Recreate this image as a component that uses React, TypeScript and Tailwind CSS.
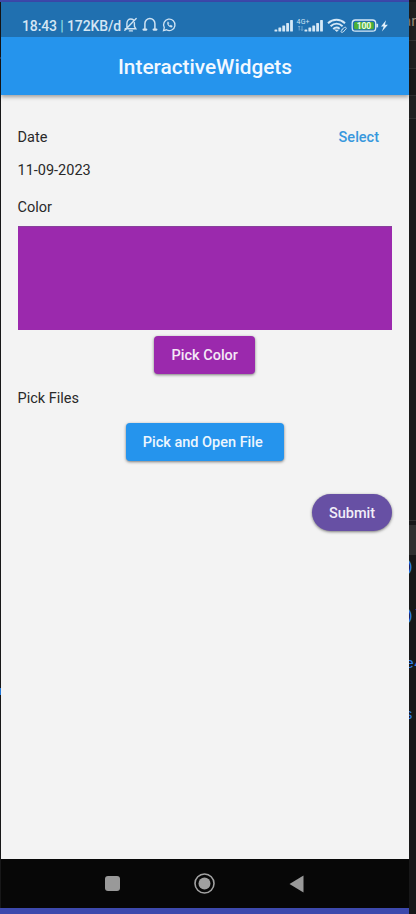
import React from "react";

function StatusLeftIcons() {
  return (
    <svg width="56" height="18" viewBox="0 0 56 18" fill="none" stroke="#cfe3f3" strokeWidth="1.4" strokeLinecap="round">
      {/* muted bell */}
      <path d="M3.9 12V7.5C3.9 4.6 5.600 3 7.800 3c1 0 1.900.3 2.600.9M11.400 6.800v3.600l1.400 2.300H5.200M1.800 14.200 13.200 2.400M6.400 14.900h3" />
      <path d="M2.200 12.800h2" />
      {/* headphones */}
      <path d="M21.900 13.200V7.500a5 5 0 0 1 10 0v5.700" strokeWidth="1.500" />
      <path d="M20.500 13.600h2.800M30.600 13.600h2.800" strokeWidth="2.200" />
      {/* chat */}
      <path d="m40.500 14.600.8-3a5.700 5.700 0 1 1 2.200 2.200z" strokeWidth="1.300" />
      <path d="M44.400 6.500c-.4 2.400 2 5 4.400 4.700l.6-1.300-1.700-.9-.8.8c-.9-.4-1.300-.9-1.600-1.700l.7-.8-.7-1.400z" fill="#cfe3f3" strokeWidth=".4" />
    </svg>
  );
}

function Signal({ x }: { x: number }) {
  return (
    <g fill="#d5e8f6">
      {[2, 4, 6, 8.5, 11.5].map((h, i) => (
        <rect key={h} x={x + i * 3.9} y={14.5 - h} width="2.8" height={h} rx=".6" />
      ))}
    </g>
  );
}

function StatusRightIcons() {
  return (
    <svg width="116" height="20" viewBox="0 0 116 20" fill="none">
      <Signal x={0.5} />
      <text x="22.600" y="7" fontSize="7" fill="#cfe3f3" className="font-[Roboto,sans-serif]" textLength="13">4G+</text>
      <path d="M25.200 13.500V9m-1 1 1-1 1 1M28 9v4.500m-1-1 1 1 1-1" stroke="#8fbbdc" strokeWidth=".7" />
      <Signal x={30.5} />
      <g stroke="#d5e8f6" strokeWidth="2">
        <path d="M54 6.200c5-4.600 12-4.600 17 0M56.600 9.200c3.600-3.200 8.400-3.200 12 0M59.200 12c2-1.700 4.700-1.700 6.500-.3" />
        <path d="m60.800 12.500 2 2 1.700-1.700" fill="#d5e8f6" strokeWidth="1" />
        <path d="m67.300 13 3-2.500c1.400-1 2.700.6 1.600 1.700l-1.700 1.500m-1-1.500-1.800 1.500c-1 1.200.2 2.300 1.500 1.400l2-1.700" strokeWidth=".9" />
      </g>
      <rect x="78.200" y="3" width="23.500" height="11.200" rx="3.200" stroke="#d5e8f6" strokeWidth="1.300" />
      <rect x="80.100" y="4.900" width="19.700" height="7.400" rx="1.500" fill="#4cb034" />
      <path d="M103.200 6.800v3.600" stroke="#d5e8f6" strokeWidth="1.800" />
      <text x="90" y="11.600" textAnchor="middle" fontSize="8.600" fontWeight="700" fill="#effbe9" className="font-[Roboto,sans-serif]" textLength="14.500">100</text>
      <path d="m112 3.200-5 6.200h2.700l-1.800 5 6-6.600h-3z" fill="#e0effa" />
    </svg>
  );
}

export default function App() {
  return (
    <div className="flex h-[914px] w-[416px] flex-col overflow-hidden bg-[#171718] font-[Roboto,sans-serif] text-[14.5px] leading-5 text-[#292929]">
      <div className="h-[2px] w-[409px] shrink-0 bg-[#3d49ad]" />
      <div className="flex h-[906px] shrink-0">
        <div className="w-px shrink-0 bg-[#171718]">
          <div className="h-[55px]" />
          <div className="h-[2px] bg-[#33415f]" />
          <div className="h-[629px]" />
          <div className="h-[7px] bg-[#2277d8]" />
        </div>
        <div className="flex w-[408px] shrink-0 flex-col bg-[#f3f3f3]">
          <header className="z-10 shrink-0 shadow-[0_2px_4px_rgba(0,0,0,0.35)]">
            <div className="flex h-[35px] items-start bg-[#2070b0] pl-[21px] text-[#d4e6f4]">
              <span className="mt-[14px] w-[101px] whitespace-nowrap text-[14px] font-medium tracking-[-0.12px]">18:43 <span className="text-[#8edfe5]">|</span> 172KB/d</span>
              <div className="mt-[14px]"><StatusLeftIcons /></div>
              <div className="ml-[95px] mt-[15px]"><StatusRightIcons /></div>
            </div>
            <h1 className="flex h-[58px] items-center justify-center bg-[#2594ed] pt-[2px] text-[20.8px] font-medium text-[#f2f8ff]">InteractiveWidgets</h1>
          </header>
          <main className="flex grow flex-col pl-[16.5px] pr-[17px] pt-[33px]">
            <div className="flex h-5 justify-between pr-[13px]">
              <span>Date</span>
              <button className="font-medium text-[#3798dd]">Select</button>
            </div>
            <span className="mt-[13px]">11-09-2023</span>
            <span className="mt-[17px]">Color</span>
            <div className="mt-[8px] h-[104px] w-[374.5px] border-t border-[#87419a] bg-[#9b29ad]" />
            <button className="mt-[6px] h-[38px] w-[101px] self-center rounded-[4px] bg-[#9b29ad] pt-[1px] font-medium text-[#f4e8f6] shadow-[0_1px_3px_rgba(0,0,0,0.5)]">Pick Color</button>
            <span className="mt-[15px]">Pick Files</span>
            <button className="mt-[14px] h-[38px] w-[158px] self-center rounded-[4px] bg-[#2594ed] pr-[4px] pt-[1px] font-medium text-[#edf6fe] shadow-[0_1px_3px_rgba(0,0,0,0.5)]">Pick and Open File</button>
            <button className="mt-[33px] h-[37px] w-[80px] self-end rounded-full bg-[#6750a4] pt-[2px] font-medium text-[#f2eef8] shadow-[0_1px_3px_rgba(0,0,0,0.5)]">Submit</button>
          </main>
          <nav className="flex h-[49px] shrink-0 items-center bg-[#070707] pl-[104px]">
            <div className="h-[15px] w-[15px] rounded-[3px] bg-[#999]" />
            <svg className="ml-[74px]" width="21" height="21" viewBox="0 0 21 21">
              <circle cx="10.500" cy="10.500" r="9.500" fill="none" stroke="#a2a2a2" strokeWidth="1.600" />
              <circle cx="10.500" cy="10.500" r="6" fill="#a0a0a0" />
            </svg>
            <svg className="ml-[74px]" width="15" height="18" viewBox="0 0 15 18"><path d="M14.500.5v17L.5 9z" fill="#999" /></svg>
          </nav>
        </div>
        <aside className="flex w-[7px] shrink-0 flex-col overflow-hidden bg-[#171718] font-['Liberation_Mono',monospace] text-[15px] leading-4 text-[#2f80ed]">
          <div className="h-[38px] shrink-0 bg-[#202020] pt-[11px] font-[Roboto,sans-serif] text-[#9a897a]"><span className="ml-[-6px]">an</span></div>
          <div className="h-[28px] shrink-0 border-t border-[#343434] bg-[#202020]" />
          <div className="h-[28px] shrink-0 border-y border-[#303030] bg-[#191919]" />
          <div className="h-[22px] shrink-0 bg-[#202020]" />
          <div className="h-[402px] shrink-0 border-t border-[#303030] bg-[#191919]" />
          <div className="h-[5px] shrink-0 border-t border-[#303030]" />
          <div className="h-[30px] shrink-0 bg-[#303030]" />
          <div className="h-[49px] shrink-0 pt-[5px]"><span className="ml-[-4px]">):</span></div>
          <div className="h-[48px] shrink-0 pt-[5px]"><span className="ml-[-4px]">)l</span></div>
          <div className="h-[50px] shrink-0 pt-[5px]"><span className="ml-[-4px]">e4</span></div>
          <div className="h-[40px] shrink-0 pt-[6px]"><span className="ml-[-5px]">s</span></div>
        </aside>
      </div>
      <div className="h-[6px] w-full shrink-0 bg-[#3d49ad]"><div className="ml-auto h-full w-[7px] bg-[#171718]" /></div>
    </div>
  );
}
